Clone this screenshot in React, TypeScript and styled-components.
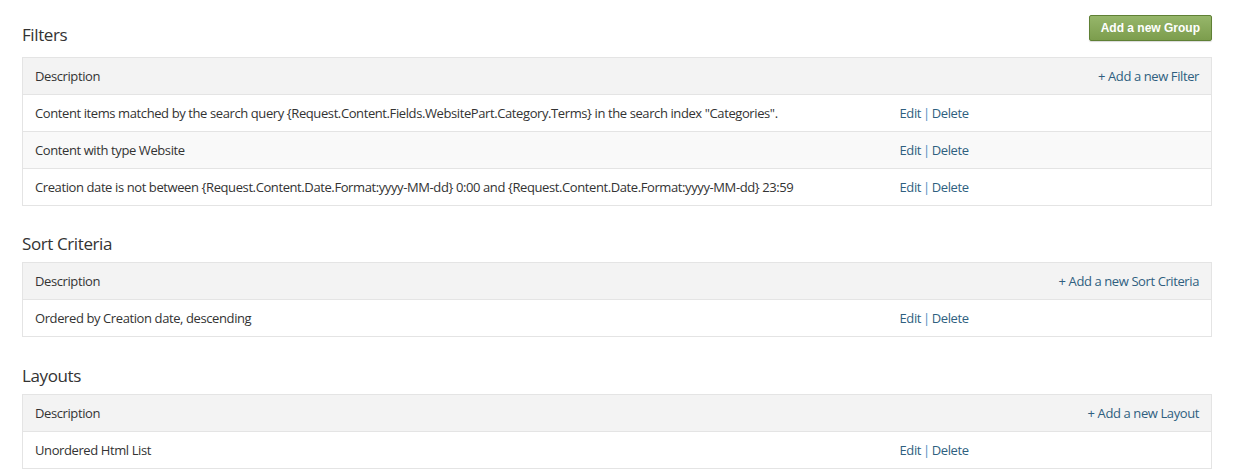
import styled, { createGlobalStyle } from 'styled-components';

const GlobalStyle = createGlobalStyle`
  body {
    margin: 0;
    background: #ffffff;
    font-family: "Open Sans", "Noto Sans", sans-serif;
    color: #333333;
  }
`;

interface IRow {
  text: string;
}

interface ISection {
  title: string;
  addLabel: string;
  rows: IRow[];
}

const sections: ISection[] = [
  {
    title: 'Filters',
    addLabel: '+ Add a new Filter',
    rows: [
      { text: 'Content items matched by the search query {Request.Content.Fields.WebsitePart.Category.Terms} in the search index "Categories".' },
      { text: 'Content with type Website' },
      { text: 'Creation date is not between {Request.Content.Date.Format:yyyy-MM-dd} 0:00 and {Request.Content.Date.Format:yyyy-MM-dd} 23:59' },
    ],
  },
  {
    title: 'Sort Criteria',
    addLabel: '+ Add a new Sort Criteria',
    rows: [{ text: 'Ordered by Creation date, descending' }],
  },
  {
    title: 'Layouts',
    addLabel: '+ Add a new Layout',
    rows: [{ text: 'Unordered Html List' }],
  },
];

const Page = styled.div`
  padding: 0 23px 0 22px;
`;

const TopBar = styled.div`
  display: flex;
  justify-content: space-between;
  align-items: flex-end;
  padding-top: 15px;
  margin-bottom: 11px;
`;

const Section = styled.section`
  & + & {
    margin-top: 27px;
  }
  & + & + & {
    margin-top: 28px;
  }
`;

const Title = styled.h2<{ $spaced?: boolean }>`
  margin: 0;
  font-size: 17px;
  font-weight: 400;
  line-height: 22px;
  letter-spacing: -0.4px;
  color: #333333;
  margin-bottom: ${(props) => (props.$spaced ? '7px' : '0')};
`;

const GroupButton = styled.button`
  margin-bottom: 5px;
  height: 26px;
  padding: 0 11px;
  font-family: "Liberation Sans", Arial, sans-serif;
  font-size: 12px;
  font-weight: 700;
  color: #ffffff;
  background: linear-gradient(to bottom, #96b66a, #7c9d4d);
  border: 1px solid #5f8035;
  border-radius: 2px;
  box-shadow: 0 1px 1px rgba(0, 0, 0, 0.15);
  cursor: pointer;
`;

const Table = styled.table`
  width: 100%;
  border-collapse: collapse;
  table-layout: fixed;
  font-size: 13px;
  letter-spacing: -0.4px;
`;

const HeadRow = styled.tr`
  background: #f3f3f3;
`;

const Row = styled.tr`
  &:nth-child(even) {
    background: #f9f9f9;
  }
`;

const Cell = styled.td<{ $right?: boolean; $head?: boolean }>`
  height: 36px;
  padding: 0 12px;
  border: 1px solid #e4e4e4;
  border-left-width: ${(props) => (props.$right ? '0' : '1px')};
  border-right-width: ${(props) => (props.$right ? '1px' : '0')};
  text-align: ${(props) => (props.$right && props.$head ? 'right' : 'left')};
  font-weight: 400;
  white-space: nowrap;
  color: #333333;
`;

const Link = styled.a`
  color: #2f5f7f;
  text-decoration: none;
`;

const Sep = styled.span`
  color: #4a8ac0;
  padding: 0 2px;
`;

function DataTable({ section }: { section: ISection }) {
  return (
    <Table>
      <colgroup>
        <col style={{ width: '865px' }} />
        <col />
      </colgroup>
      <thead>
        <HeadRow>
          <Cell as="th" $head>Description</Cell>
          <Cell as="th" $head $right>
            <Link href="#">{section.addLabel}</Link>
          </Cell>
        </HeadRow>
      </thead>
      <tbody>
        {section.rows.map((row) => (
          <Row key={row.text}>
            <Cell>{row.text}</Cell>
            <Cell $right>
              <Link href="#">Edit</Link>
              <Sep>|</Sep>
              <Link href="#">Delete</Link>
            </Cell>
          </Row>
        ))}
      </tbody>
    </Table>
  );
}

export default function App() {
  return (
    <Page>
      <GlobalStyle />
      {sections.map((section, i) => (
        <Section key={section.title}>
          {i === 0 ? (
            <TopBar>
              <Title>{section.title}</Title>
              <GroupButton>Add a new Group</GroupButton>
            </TopBar>
          ) : (
            <Title $spaced>{section.title}</Title>
          )}
          <DataTable section={section} />
        </Section>
      ))}
    </Page>
  );
}
